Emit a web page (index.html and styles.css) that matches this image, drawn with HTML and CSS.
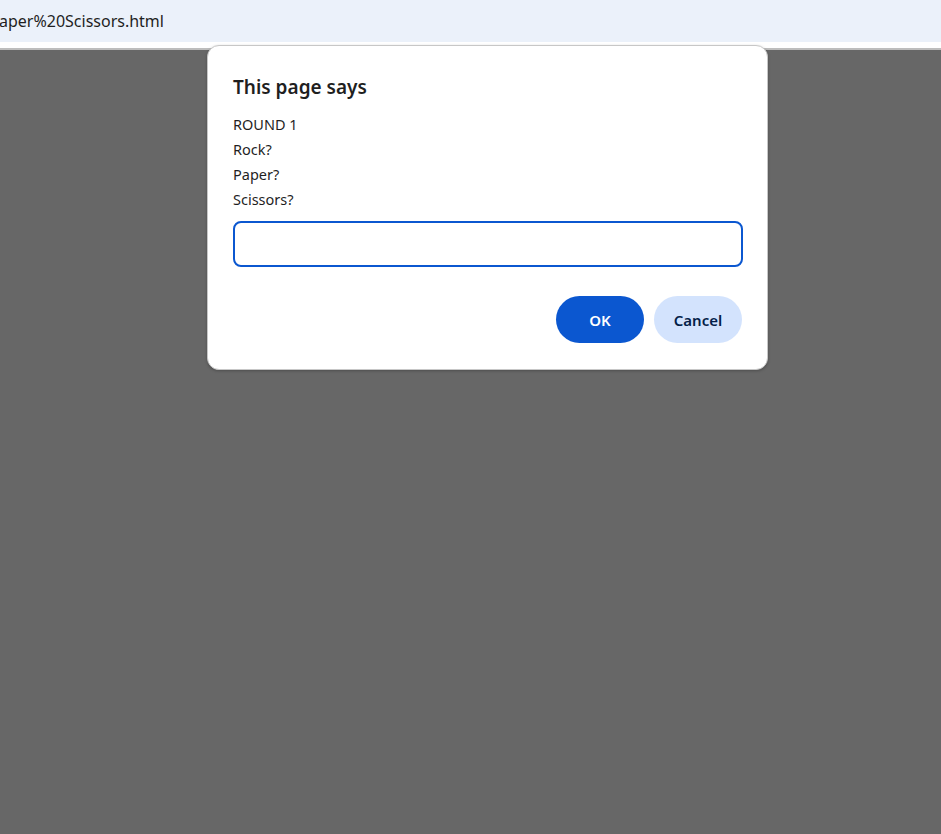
FILE: index.html
```html
<!DOCTYPE html>
<html>
<head>
<meta charset="utf-8">
<link rel="stylesheet" href="styles.css">
</head>
<body>
<div class="urlbar"><span class="url">aper%20Scissors.html</span></div>
<div class="strip"></div>
<div class="sep"></div>
<div class="page"></div>
<div class="dialog">
  <div class="title">This page says</div>
  <div class="message">
    <div>ROUND 1</div>
    <div>Rock?</div>
    <div>Paper?</div>
    <div>Scissors?</div>
  </div>
  <div class="field"></div>
  <div class="actions">
    <button class="btn ok">OK</button>
    <button class="btn cancel">Cancel</button>
  </div>
</div>
</body>
</html>
```
FILE: styles.css
```css
html, body {
  margin: 0;
  padding: 0;
  height: 100%;
  overflow: hidden;
  font-family: "Noto Sans", "Open Sans", sans-serif;
}
body {
  display: flex;
  flex-direction: column;
  background: #676767;
}
.urlbar {
  height: 42px;
  background: #ebf1fa;
  display: flex;
  align-items: center;
  flex: none;
}
.url {
  font-size: 16px;
  color: #1f1f1f;
  margin-left: -1px;
}
.strip {
  height: 6px;
  background: #ffffff;
  flex: none;
}
.sep {
  height: 2px;
  background: #bdbdbd;
  flex: none;
}
.page {
  flex: 1;
  background: #676767;
}
.dialog {
  position: absolute;
  left: 207px;
  top: 45px;
  background: #ffffff;
  border: 1px solid #c7c7c7;
  border-radius: 12px;
  box-shadow: 0 1px 3px rgba(0,0,0,0.25);
  padding: 29px 24px 0 25px;
  box-sizing: content-box;
  width: 510px;
  height: 294px;
}
.title {
  font-size: 19px;
  font-weight: 600;
  line-height: 24px;
  color: #1f1f1f;
}
.message {
  margin-top: 13px;
  font-size: 14.5px;
  line-height: 25px;
  color: #1f1f1f;
}
.field {
  margin-top: 9px;
  height: 42px;
  border: 2px solid #0b57d0;
  border-radius: 8px;
}
.actions {
  margin-top: 29px;
  display: flex;
  justify-content: flex-end;
  gap: 10px;
  padding-right: 1px;
}
.btn {
  width: 88px;
  height: 47px;
  border: none;
  border-radius: 24px;
  font-family: "Noto Sans", "Open Sans", sans-serif;
  font-size: 15px;
  font-weight: 600;
  padding: 0;
}
.ok {
  background: #0b57d0;
  color: #ffffff;
}
.cancel {
  background: #d3e3fd;
  color: #041e49;
}
```
